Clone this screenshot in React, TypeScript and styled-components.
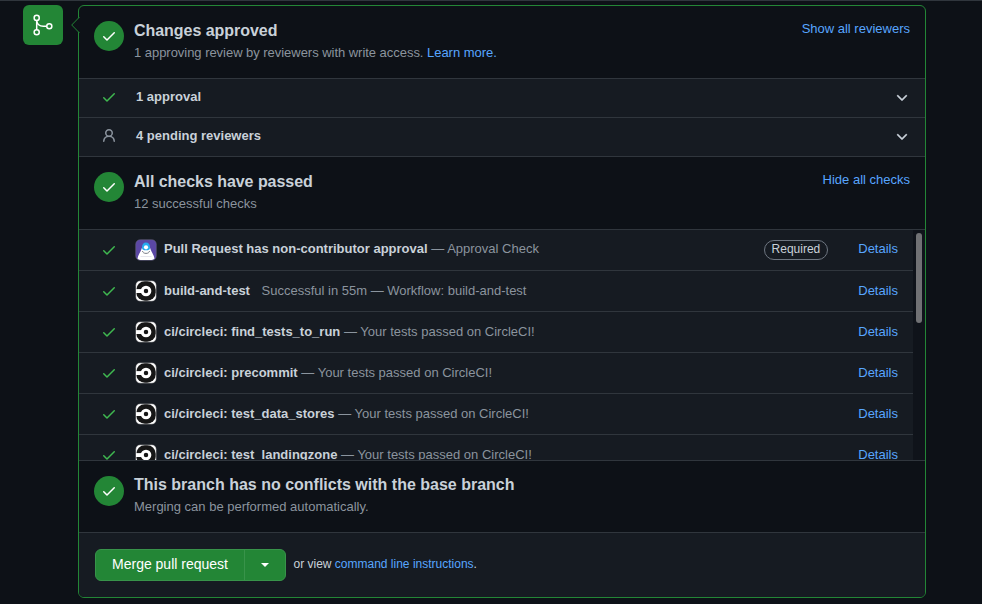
import React from 'react';
import styled, { createGlobalStyle } from 'styled-components';

const color = {
  canvas: '#0d1117',
  subtle: '#161b22',
  border: '#30363d',
  text: '#c9d1d9',
  muted: '#8b949e',
  link: '#58a6ff',
  green: '#238636',
  success: '#3fb950',
};

const GlobalStyle = createGlobalStyle`
  * { box-sizing: border-box; }
  body {
    margin: 0;
    background: ${color.canvas};
    color: ${color.text};
    font-family: "Liberation Sans", Arial, sans-serif;
    font-size: 13px;
    line-height: 20px;
    overflow: hidden;
  }
  svg { display: block; flex: none; }
`;

const Page = styled.main`
  display: flex;
  align-items: flex-start;
  height: 604px;
  padding: 4px 0 0 23px;
  border-top: 1px solid ${color.border};
`;

const MergeBadge = styled.div`
  width: 40px;
  height: 40px;
  margin-right: 15px;
  border-radius: 6px;
  background: ${color.green};
  color: #fff;
`;

const Box = styled.section`
  position: relative;
  width: 848px;
  height: 593px;
  border: 1px solid ${color.green};
  border-radius: 6px;
  background: ${color.canvas};
`;

const Caret = styled.svg`
  position: absolute;
  left: -8px;
  top: 10px;
`;

const Section = styled.header<{ $height?: number }>`
  display: flex;
  align-items: flex-start;
  height: ${(p) => p.$height ?? 73}px;
  padding: 15px 15px 0;
  border-bottom: 1px solid ${color.border};
`;

const StatusCircle = styled.span`
  display: flex;
  flex: none;
  align-items: center;
  justify-content: center;
  width: 30px;
  height: 30px;
  margin-right: 10px;
  border-radius: 50%;
  background: ${color.green};
  color: #fff;
`;

const Heading = styled.div<{ $lift?: number }>`
  flex: 1;
  margin-top: ${(p) => -(p.$lift ?? 2)}px;
`;

const Title = styled.h3<{ $tight?: boolean }>`
  margin: 0;
  font-size: 16px;
  font-weight: 700;
  line-height: 24px;
  letter-spacing: ${(p) => (p.$tight ? '-0.04px' : 'normal')};
`;

const Description = styled.p<{ $tight?: boolean }>`
  margin: -1px 0 0;
  line-height: 22px;
  color: ${color.muted};
  letter-spacing: ${(p) => (p.$tight ? '-0.035px' : 'normal')};
`;

const Link = styled.a`
  color: ${color.link};
  text-decoration: none;
`;

const ToggleLink = styled(Link)`
  margin-top: -2px;
`;

const ReviewRow = styled.div`
  display: flex;
  align-items: flex-start;
  height: 39px;
  padding: 8px 15px 0 22px;
  border-bottom: 1px solid ${color.border};
  background: ${color.subtle};

  > svg { margin-top: 2px; }
`;

const ReviewLabel = styled.strong`
  flex: 1;
  margin-left: 19px;
`;

const ChecksPane = styled.div`
  display: flex;
  height: 231px;
  border-bottom: 1px solid ${color.border};
`;

const CheckList = styled.div`
  flex: 1;
  overflow: hidden;
`;

const ScrollTrack = styled.div`
  width: 12px;
  padding: 3px;
  background: #0f131a;
`;

const ScrollThumb = styled.div`
  height: 90px;
  border-radius: 3px;
  background: #707174;
`;

const CheckRow = styled.div<{ $first?: boolean }>`
  display: flex;
  align-items: flex-start;
  height: 41px;
  padding: ${(p) => (p.$first ? 9 : 10)}px 15px 0 22px;
  border-bottom: 1px solid ${color.border};
  background: ${color.subtle};

  > svg { margin-top: ${(p) => (p.$first ? 3 : 2)}px; }
`;

const Avatar = styled.span<{ $first?: boolean }>`
  display: block;
  width: 22px;
  height: 22px;
  margin: ${(p) => (p.$first ? 0 : -1)}px 7px 0 18px;
`;

const CheckText = styled.span<{ $gap?: boolean }>`
  flex: 1;
  white-space: nowrap;
  color: ${color.muted};

  strong {
    margin-right: ${(p) => (p.$gap ? 8 : 0)}px;
    color: ${color.text};
  }
`;

const Required = styled.span`
  height: 20px;
  margin: 1px 30px 0 0;
  padding: 0 7px;
  border: 1px solid #6e7681;
  border-radius: 10px;
  font-size: 12px;
  line-height: 17px;
`;

const Footer = styled.footer`
  display: flex;
  align-items: flex-start;
  height: 64px;
  padding: 16px;
  border-radius: 0 0 5px 5px;
  background: ${color.subtle};
`;

const ButtonGroup = styled.div`
  display: flex;
  width: 191px;
  height: 32px;
  border: 1px solid #38934a;
  border-radius: 6px;
  background: ${color.green};
`;

const MergeButton = styled.button`
  width: 149px;
  padding: 0 0 1px;
  border: 0;
  border-right: 1px solid #38934a;
  background: none;
  color: #fff;
  font: 14px/29px "Liberation Sans", Arial, sans-serif;
`;

const DropdownButton = styled.button`
  display: flex;
  flex: 1;
  align-items: center;
  justify-content: center;
  padding: 0;
  border: 0;
  background: none;
`;

const DropdownCaret = styled.i`
  border: 4px solid transparent;
  border-top-color: #fff;
  border-bottom: 0;
`;

const Hint = styled.span`
  margin: 5px 0 0 7.5px;
  font-size: 12px;
`;

const CheckIcon = ({ fill = color.success }: { fill?: string }) => (
  <svg width="16" height="16" viewBox="0 0 16 16" fill={fill}>
    <path d="M13.78 4.22a.75.75 0 010 1.06l-7.25 7.25a.75.75 0 01-1.06 0L2.22 9.28a.75.75 0 011.06-1.06L6 10.94l6.72-6.72a.75.75 0 011.06 0z" />
  </svg>
);

const PersonIcon = () => (
  <svg width="16" height="16" viewBox="0 0 16 16" fill={color.muted}>
    <path d="M10.5 5a2.5 2.5 0 11-5 0 2.5 2.5 0 015 0zm.061 3.073a4 4 0 10-5.123 0 6.004 6.004 0 00-3.431 5.142.75.75 0 001.498.07 4.5 4.5 0 018.99 0 .75.75 0 101.498-.07 6.005 6.005 0 00-3.432-5.142z" />
  </svg>
);

const ChevronIcon = () => (
  <svg width="16" height="16" viewBox="0 0 16 16" fill={color.text} stroke={color.text} strokeWidth=".3">
    <path d="M12.78 6.22a.75.75 0 010 1.06l-4.25 4.25a.75.75 0 01-1.06 0L3.22 7.28a.75.75 0 011.06-1.06L8 9.94l3.72-3.72a.75.75 0 011.06 0z" />
  </svg>
);

const MergeIcon = () => (
  <svg width="40" height="40" viewBox="0 0 40 40" fill="none" stroke="currentColor" strokeWidth="1.5">
    <circle cx="13.7" cy="12.9" r="2.55" />
    <circle cx="13.7" cy="27.2" r="2.55" />
    <circle cx="26.3" cy="21.2" r="2.55" />
    <path d="M13.7 15.5v9.2M13.7 15.5c.4 3.6 3 5.7 6.600 5.700h3.400" />
  </svg>
);

const CircleAvatar = () => (
  <svg width="22" height="22" viewBox="0 0 22 22">
    <rect x=".7" y=".7" width="20.6" height="20.6" rx="4.5" fill="#fff" stroke="#303338" strokeWidth=".5" />
    <rect x="1.3" y="1.3" width="19.4" height="19.4" rx="8.5" fill="#161616" />
    <path d="M1 9.1h6v3.900H1z" fill="#fff" />
    <circle cx="11" cy="11" r="3.8" fill="#161616" stroke="#fff" strokeWidth="3.1" />
  </svg>
);

const ApprovalAvatar = () => (
  <svg width="22" height="22" viewBox="0 0 22 22">
    <rect x=".7" y=".7" width="20.6" height="20.6" rx="4.5" fill="#5b47a5" stroke="#6b6b7a" strokeWidth=".5" />
    <path d="M2.500 19.500C3.500 15 6 12.500 7.200 8h7.600c1.200 4.500 3.700 7 4.700 11.500-.8 1.500-3 1.500-4 1.500h-9c-1 0-3.200 0-4-1.500z" fill="#fff" />
    <path d="M7 8.200C7 5.300 8.700 3.500 11 3.500s4 1.800 4 4.700-1.500 3-4 3-4-.1-4-3z" fill="#27abef" />
    <circle cx="11" cy="8.300" r="2.100" fill="#fff" />
    <path d="M7.500 12c.2 3.200 6.800 3.200 7 0" fill="none" stroke="#7c7f89" strokeWidth="1" />
    <path d="M5.500 17.500h11" stroke="#e6e6ee" strokeWidth="1" />
  </svg>
);

type Check = { name: string; note: string; required?: boolean; gap?: boolean };

const checks: Check[] = [
  { name: 'Pull Request has non-contributor approval', note: '— Approval Check', required: true },
  { name: 'build-and-test', note: 'Successful in 55m — Workflow: build-and-test', gap: true },
  { name: 'ci/circleci: find_tests_to_run', note: '— Your tests passed on CircleCI!' },
  { name: 'ci/circleci: precommit', note: '— Your tests passed on CircleCI!' },
  { name: 'ci/circleci: test_data_stores', note: '— Your tests passed on CircleCI!' },
  { name: 'ci/circleci: test_landingzone', note: '— Your tests passed on CircleCI!' },
];

export default function App() {
  return (
    <>
      <GlobalStyle />
      <Page>
        <MergeBadge><MergeIcon /></MergeBadge>
        <Box>
          <Caret width="9" height="18" viewBox="0 0 9 18">
            <path d="M8.5 1L.7 9l7.8 8z" fill={color.canvas} />
            <path d="M8.5 2v14" stroke={color.canvas} />
            <path d="M8.5 1L.7 9l7.8 8" fill="none" stroke={color.green} />
          </Caret>
          <Section>
            <StatusCircle><CheckIcon fill="#fff" /></StatusCircle>
            <Heading>
              <Title $tight>Changes approved</Title>
              <Description $tight>
                1 approving review by reviewers with write access. <Link>Learn more.</Link>
              </Description>
            </Heading>
            <ToggleLink>Show all reviewers</ToggleLink>
          </Section>
          <ReviewRow>
            <CheckIcon />
            <ReviewLabel>1 approval</ReviewLabel>
            <ChevronIcon />
          </ReviewRow>
          <ReviewRow>
            <PersonIcon />
            <ReviewLabel>4 pending reviewers</ReviewLabel>
            <ChevronIcon />
          </ReviewRow>
          <Section>
            <StatusCircle><CheckIcon fill="#fff" /></StatusCircle>
            <Heading>
              <Title $tight>All checks have passed</Title>
              <Description>12 successful checks</Description>
            </Heading>
            <ToggleLink>Hide all checks</ToggleLink>
          </Section>
          <ChecksPane>
            <CheckList>
              {checks.map((c) => (
                <CheckRow key={c.name} $first={c.required}>
                  <CheckIcon />
                  <Avatar $first={c.required}>{c.required ? <ApprovalAvatar /> : <CircleAvatar />}</Avatar>
                  <CheckText $gap={c.gap}>
                    <strong>{c.name}</strong> {c.note}
                  </CheckText>
                  {c.required && <Required>Required</Required>}
                  <Link>Details</Link>
                </CheckRow>
              ))}
            </CheckList>
            <ScrollTrack><ScrollThumb /></ScrollTrack>
          </ChecksPane>
          <Section $height={72}>
            <StatusCircle><CheckIcon fill="#fff" /></StatusCircle>
            <Heading $lift={3}>
              <Title>This branch has no conflicts with the base branch</Title>
              <Description>Merging can be performed automatically.</Description>
            </Heading>
          </Section>
          <Footer>
            <ButtonGroup>
              <MergeButton>Merge pull request</MergeButton>
              <DropdownButton aria-label="Select merge method"><DropdownCaret /></DropdownButton>
            </ButtonGroup>
            <Hint>
              or view <Link>command line instructions</Link>.
            </Hint>
          </Footer>
        </Box>
      </Page>
    </>
  );
}
